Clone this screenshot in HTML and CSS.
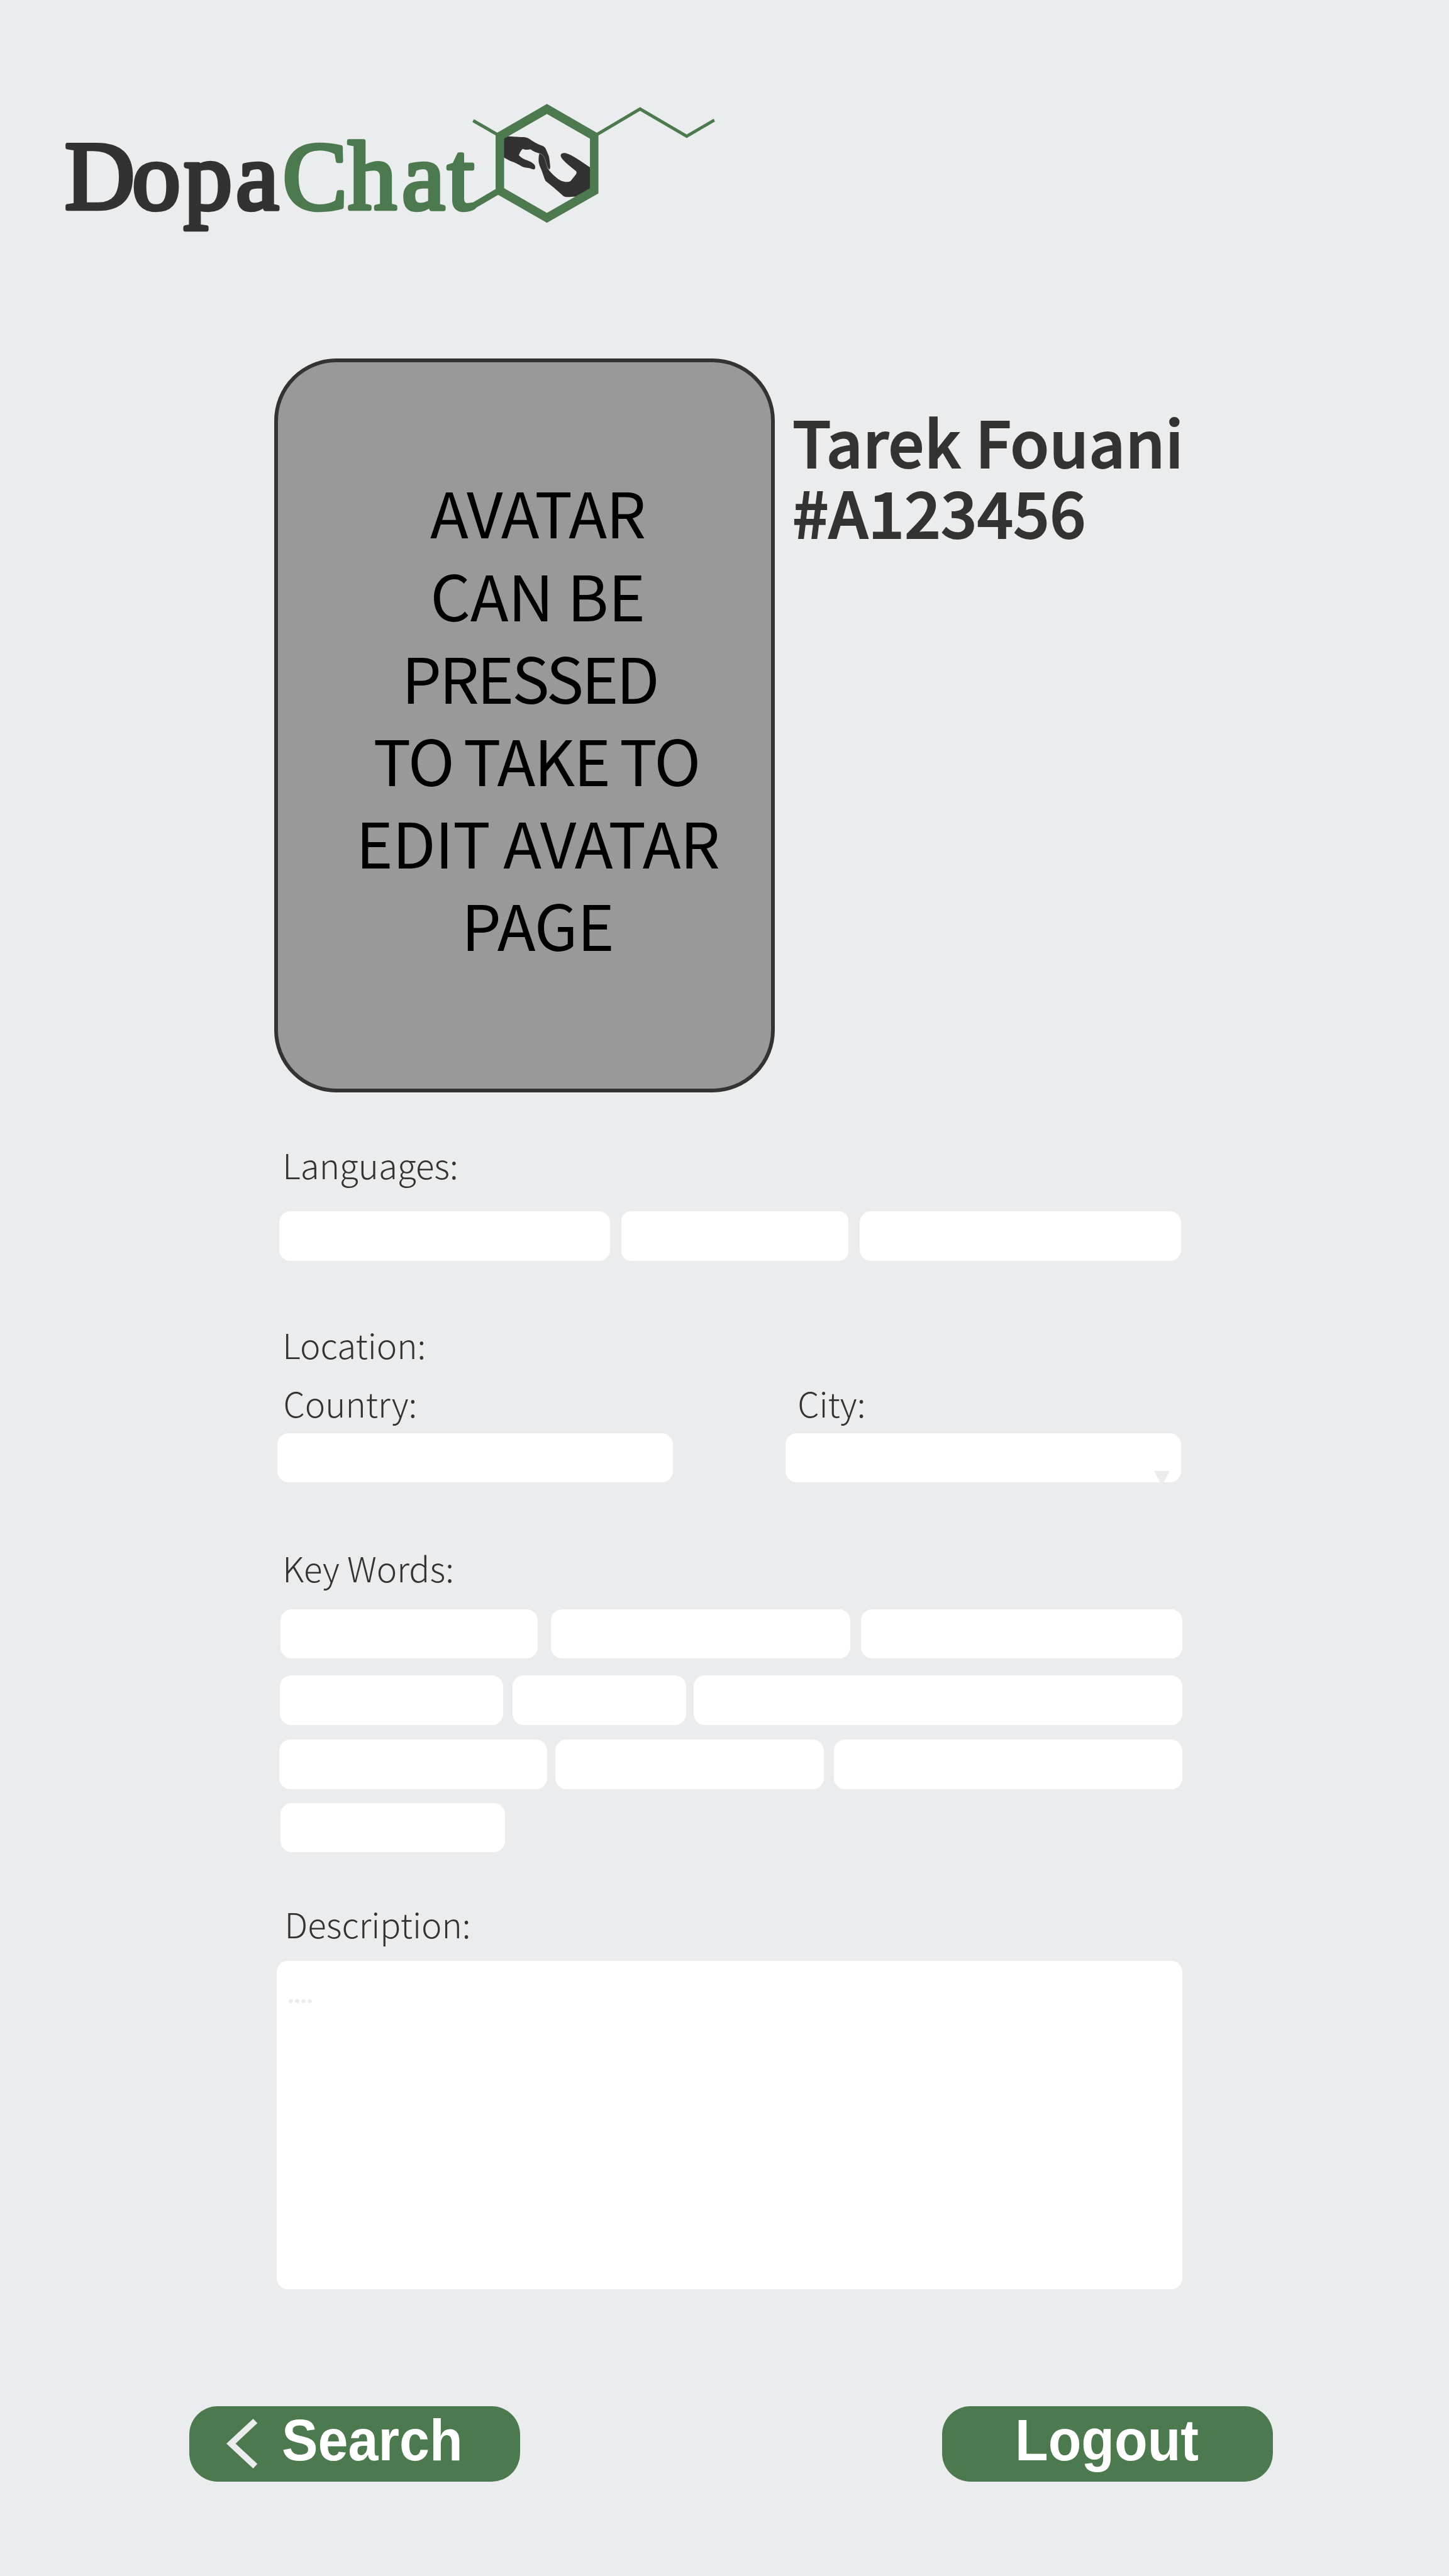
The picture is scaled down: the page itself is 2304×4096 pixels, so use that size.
FILE: index.html
```
<!DOCTYPE html>
<html lang="en">
<head>
<meta charset="utf-8">
<title>DopaChat – Profile</title>
<link rel="stylesheet" href="styles.css">
</head>
<body>
<header class="header">
  <svg class="logo" viewBox="100 160 1060 215" width="1060" height="215" role="img" aria-label="DopaChat">
    <text class="logo-text logo-dark" x="102.9 210 292.2 375" y="332">Dopa</text>
    <text class="logo-text logo-green" x="449.6 553.6 639 711.4" y="332">Chat</text>
    <g transform="translate(725.5 146.7) scale(.27566 .25729)">
      <!-- hands -->
      <path fill="#323232" d="M300 272C340 274 360 277 392 277C415 280 425 291 440 301C460 314 480 325 496 331C507 336 514 342 517 352L533 392C538 410 540 440 542 460C542 472 538 478 535 477C525 465 520 445 514 420C507 395 497 383 480 378C460 373 445 365 429 353L420 354C405 356 392 355 383 350C372 362 366 375 361 389C370 400 380 408 395 415C420 424 440 434 452 449C458 462 456 475 448 477C438 476 430 471 420 469C400 466 390 465 376 457C355 443 335 433 310 424L270 401V280Z"/>
      <path fill="#323232" d="M480 378C497 383 507 395 514 420C520 445 525 465 533 479C550 503 575 527 597 542C620 556 645 557 659 549L691 506C696 496 694 490 688 485C660 462 635 440 618 420C605 404 600 395 603 386C608 375 622 373 640 379C670 390 700 412 725 431L776 468V597L688 645C665 645 650 648 635 647C622 647 618 642 610 634L560 587L515 548C510 540 505 522 498 500C490 475 480 455 476 435C473 410 476 390 480 378Z"/>
      <path fill="none" stroke="#a5a5a5" stroke-width="1.5" d="M480 378C497 383 507 395 514 420C520 445 525 465 533 479"/>
      <!-- molecule -->
      <g fill="#4d794f">
        <path fill-rule="evenodd" d="M523 72L820 256V625L523 807L227 625V256ZM523 134L276 287V593L523 745L771 593V287Z"/>
        <path d="M102 166L240 252L228 267L93 184Z"/>
        <path d="M808 252L1060 92L1329 261L1485 163L1492 181L1329 283L1060 115L818 268Z"/>
        <path d="M50 694C68 694 78 692 88 686L232 595L244 633L122 709C98 727 85 738 52 738Z"/>
      </g>
    </g>
  </svg>
</header>

<main class="profile">
  <section class="hero">
    <a class="avatar"><span class="l1">AVATAR</span><span class="l2">CAN BE</span><span class="l3">PRESSED </span><span class="l4">TO TAKE TO</span><span class="l5">EDIT AVATAR</span><span class="l6">PAGE</span></a>
    <h1 class="name">Tarek Fouani<br>#A123456</h1>
  </section>

  <section class="languages">
    <h2 class="label">Languages:</h2>
    <div class="row row-lang"><i class="field"></i><i class="field narrow"></i><i class="field"></i></div>
  </section>

  <section class="location">
    <h2 class="label">Location:</h2>
    <div class="places">
      <div class="place"><h3 class="label">Country:</h3><div class="field"></div></div>
      <div class="place"><h3 class="label city">City:</h3>
        <div class="field select"><svg width="26" height="24" viewBox="0 0 26 24"><path d="M0 0H25L12.5 23.5Z" fill="#ebecee"/></svg></div></div>
    </div>
  </section>

  <section class="keywords">
    <h2 class="label">Key Words:</h2>
    <div class="row row-k1"><i class="field"></i><i class="field"></i><i class="field"></i></div>
    <div class="row row-k2"><i class="field"></i><i class="field"></i><i class="field"></i></div>
    <div class="row row-k3"><i class="field"></i><i class="field"></i><i class="field"></i></div>
    <div class="row row-k4"><i class="field"></i></div>
  </section>

  <section class="description">
    <h2 class="label">Description:</h2>
    <div class="textbox">....</div>
  </section>
</main>

<nav class="actions">
  <a class="button back">
    <svg width="50" height="80" viewBox="0 0 50 80"><path d="M0 39.4L42.5 0L49.2 7L14.5 39.4L49.2 71.8L42.5 79Z" fill="#ebecee"/></svg>
    <span>Search</span>
  </a>
  <a class="button logout"><span>Logout</span></a>
</nav>
</body>
</html>
```
FILE: styles.css
```
* { box-sizing: border-box; margin: 0; padding: 0; }

body {
  width: 2304px;
  height: 4096px;
  overflow: hidden;
  background: #ebecee;
  color: #333331;
  font-family: "Noto Sans CJK JP", "Noto Sans", sans-serif;
}

.header { height: 570.2px; padding: 160px 0 0 100px; }
.logo { display: block; overflow: visible; }
.logo-text {
  font-family: "Liberation Serif", serif;
  font-size: 154px;
  stroke-width: 6.5px;
  stroke-linejoin: round;
}
.logo-dark { fill: #323232; stroke: #323232; }
.logo-green { fill: #4d794f; stroke: #4d794f; }

.hero { display: flex; gap: 27.6px; padding-left: 435.8px; }
.avatar {
  display: flex;
  flex-direction: column;
  align-items: center;
  width: 796.5px;
  height: 1167.3px;
  padding: 171.2px 0 0 42px;
  border: 6.4px solid #333331;
  border-radius: 99px;
  background: #999;
  color: #000;
  font-size: 100px;
  line-height: 131.2px;
  white-space: pre;
}
.l1 { letter-spacing: -1.3px; }
.l2 { letter-spacing: -.4px; }
.l3 { letter-spacing: -3.5px; margin-right: 7px; }
.l4 { letter-spacing: -1.8px; word-spacing: -5px; margin-right: 4px; }
.l5 { letter-spacing: -1px; }
.l6 { letter-spacing: -.7px; }

.name {
  padding-top: 73.8px;
  font-size: 100.8px;
  font-weight: 500;
  line-height: 112.4px;
  letter-spacing: .25px;
  -webkit-text-stroke: 2px #333331;
}

.label {
  padding-left: 449.2px;
  font-size: 54.7px;
  font-weight: 300;
  line-height: 80px;
}

.field {
  display: block;
  height: 78.6px;
  border-radius: 18px;
  background: #fff;
}
.narrow { border-radius: 15px; }
.row { display: grid; }

.languages { margin-top: 74.1px; }
.row-lang {
  margin-top: 34.9px;
  padding-left: 444.4px;
  grid-template-columns: 525.2px 360.4px 510.4px;
  column-gap: 18.6px;
}

.location { margin-top: 93.2px; }
.places {
  display: grid;
  grid-template-columns: 628.7px 628.4px;
  column-gap: 179.2px;
  margin-top: 12.4px;
  padding-left: 441.4px;
}
.place { display: grid; row-gap: 8.2px; }
.place .label { padding-left: 9px; }
.place .city { padding-left: 19px; }
.select { display: flex; justify-content: flex-end; align-items: flex-end; padding-right: 17px; overflow: hidden; }
.select svg { flex: none; margin-bottom: -6px; }

.keywords { margin-top: 95.3px; }
.keywords .label { margin-bottom: 26.1px; }
.row-k1 {
  padding-left: 446.4px;
  grid-template-columns: 429.7px 492.8px 510.9px;
}
.row-k1 .field:nth-child(1) { margin-right: 20.9px; }
.row-k1 .field:nth-child(2) { margin-right: 17.2px; }
.row-k2 {
  margin-top: 26.6px;
  padding-left: 444.5px;
  grid-template-columns: 370.5px 288.4px 776.4px;
}
.row-k2 .field:nth-child(1) { margin-right: 15.3px; }
.row-k2 .field:nth-child(2) { margin-right: 12.4px; }
.row-k3 {
  margin-top: 23.9px;
  padding-left: 443.5px;
  grid-template-columns: 439.3px 443.1px 553.9px;
}
.row-k3 .field:nth-child(1) { margin-right: 12.4px; }
.row-k3 .field:nth-child(2) { margin-right: 16.2px; }
.row-k4 {
  margin-top: 21.7px;
  padding-left: 446.4px;
  grid-template-columns: 357px;
}

.description { margin-top: 73.3px; }
.description .label { padding-left: 452.5px; }
.textbox {
  width: 1440px;
  height: 521.3px;
  margin: 19.7px 0 0 440px;
  padding: 28.7px 19px;
  border-radius: 17.5px;
  background: #fff;
  color: #ebebeb;
  font: italic bold 38px/50px "Liberation Serif", serif;
  letter-spacing: .6px;
}

.actions {
  display: flex;
  gap: 670.5px;
  margin-top: 186.8px;
  padding-left: 300.5px;
}
.button {
  display: flex;
  width: 526.5px;
  height: 119.2px;
  border-radius: 45px;
  background: #4d794f;
  color: #fff;
  font: bold 93px/109.6px "Liberation Sans", sans-serif;
}
.button span { transform: scaleX(.927); transform-origin: left; }
.back { padding-left: 59.6px; gap: 38.4px; }
.back svg { margin-top: 19.6px; }
.logout { padding-left: 116.8px; }
```
